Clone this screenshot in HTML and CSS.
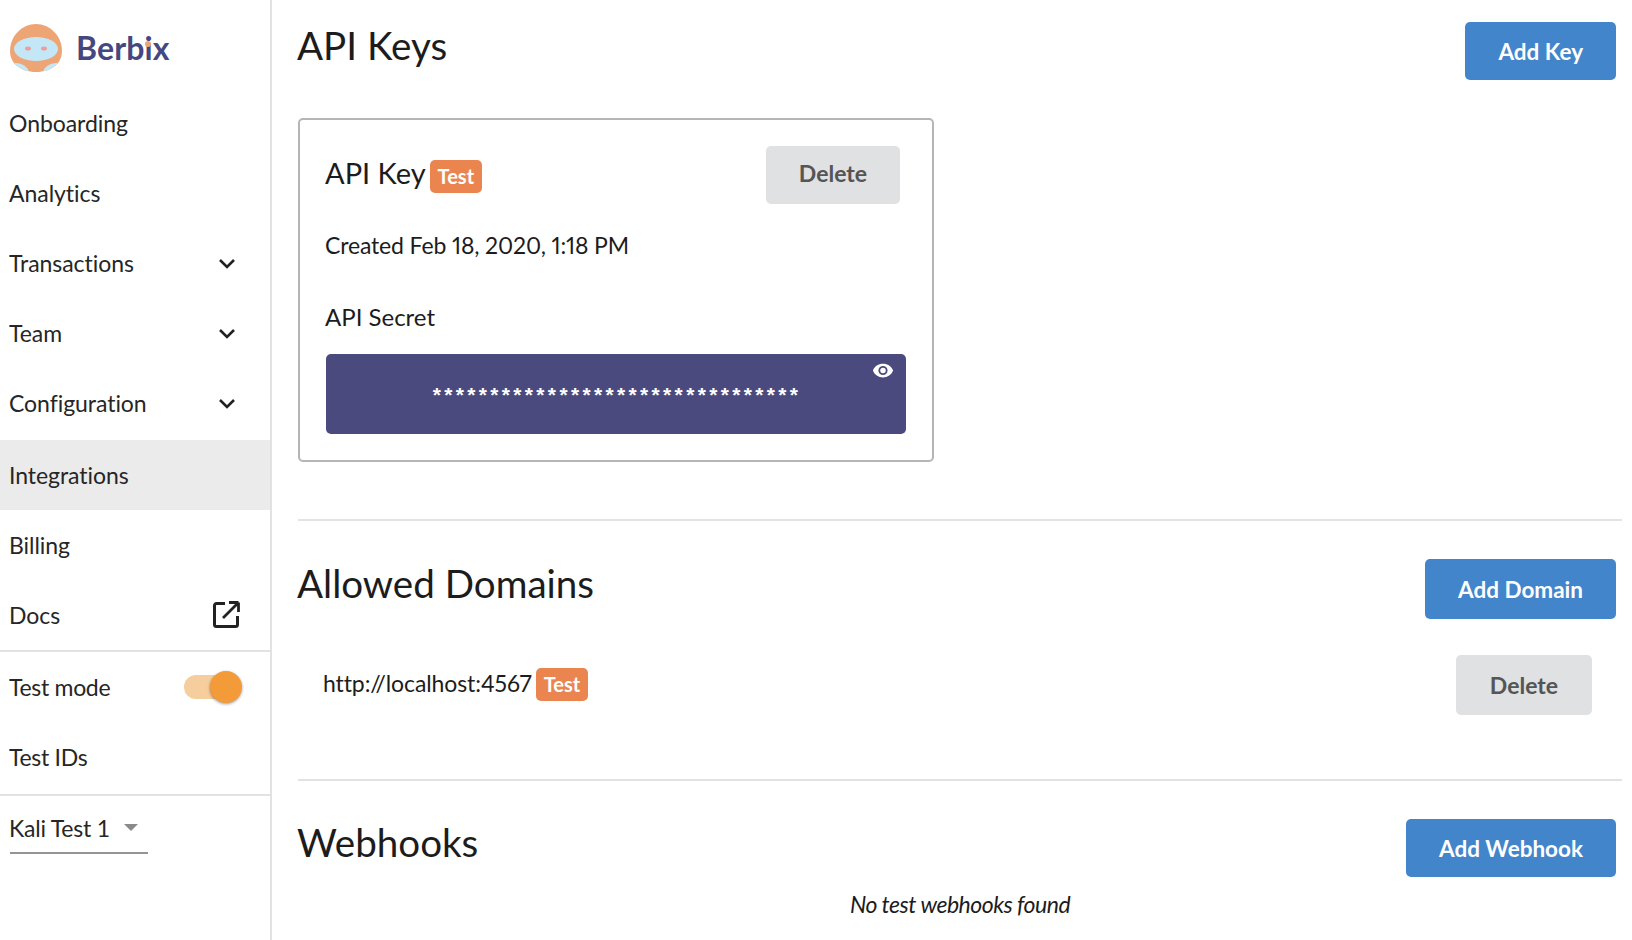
FILE: index.html
```html
<!DOCTYPE html>
<html lang="en">
<head>
<meta charset="utf-8">
<title>Berbix</title>
<link rel="stylesheet" href="styles.css">
</head>
<body>
<div class="app">
  <nav class="sidebar">
    <div class="brand">
      <svg class="logo" viewBox="0 0 52 50" width="52" height="50">
        <defs><clipPath id="lc"><path d="M26 1C12 1 0 13 0 28c0 12 10 21 26 21s26-9 26-21C52 13 40 1 26 1z"/></clipPath></defs>
        <path d="M26 1C12 1 0 13 0 28c0 12 10 21 26 21s26-9 26-21C52 13 40 1 26 1z" fill="#eea576"/>
        <g clip-path="url(#lc)">
          <ellipse cx="5" cy="50" rx="14" ry="10" fill="#c3e7f6"/>
          <ellipse cx="47" cy="50" rx="14" ry="10" fill="#c3e7f6"/>
        </g>
        <ellipse cx="26" cy="26" rx="22" ry="12" fill="#c3e7f6"/>
        <ellipse cx="18" cy="25.500" rx="3" ry="2" fill="#ef9c9c"/>
        <ellipse cx="34" cy="25.500" rx="3" ry="2" fill="#ef9c9c"/>
      </svg>
      <span class="brand-name">Berb<span class="brand-i">i</span>x</span>
    </div>
    <ul class="nav">
      <li class="nav-item">Onboarding</li>
      <li class="nav-item">Analytics</li>
      <li class="nav-item">Transactions<svg class="chev" viewBox="0 0 18 12" width="18" height="12"><path d="M2 2l7 7 7-7" fill="none" stroke="#222" stroke-width="2.600"/></svg></li>
      <li class="nav-item">Team<svg class="chev" viewBox="0 0 18 12" width="18" height="12"><path d="M2 2l7 7 7-7" fill="none" stroke="#222" stroke-width="2.600"/></svg></li>
      <li class="nav-item">Configuration<svg class="chev" viewBox="0 0 18 12" width="18" height="12"><path d="M2 2l7 7 7-7" fill="none" stroke="#222" stroke-width="2.600"/></svg></li>
      <li class="nav-item active">Integrations</li>
      <li class="nav-item">Billing</li>
      <li class="nav-item">Docs<svg class="ext" viewBox="0 0 27 27" width="27" height="27"><path d="M12 2.500H3.500a2 2 0 0 0-2 2v19a2 2 0 0 0 2 2h19a2 2 0 0 0 2-2V15" fill="none" stroke="#222" stroke-width="3"/><path d="M25.500 1.500H16M25.500 1.500V11M25.500 1.500L10 17" fill="none" stroke="#222" stroke-width="2.800"/></svg></li>
    </ul>
    <ul class="nav nav-test">
      <li class="nav-item">Test mode<span class="switch"><span class="knob"></span></span></li>
      <li class="nav-item">Test IDs</li>
    </ul>
    <div class="account">
      <div class="select">Kali Test 1<span class="caret"></span></div>
    </div>
  </nav>
  <main class="main">
    <section class="section section-keys">
      <header class="section-head">
        <h1>API Keys</h1>
        <button class="btn btn-primary">Add Key</button>
      </header>
      <article class="card">
        <div class="card-head">
          <h2>API Key</h2><span class="tag">Test</span>
          <button class="btn btn-muted btn-card">Delete</button>
        </div>
        <p class="created">Created Feb 18, 2020, 1:18 PM</p>
        <p class="secret-label">API Secret</p>
        <div class="secret">
          <span class="stars">********************************</span>
          <svg class="eye" viewBox="0 0 24 16" width="22" height="15"><path fill-rule="evenodd" d="M12 .5C7 .5 2.700 3.300 1 8c1.700 4.700 6 7.500 11 7.500S21.300 12.700 23 8C21.300 3.300 17 .5 12 .5zM12 13a5 5 0 1 1 0-10 5 5 0 0 1 0 10z" fill="#fff"/><circle cx="12" cy="8" r="3" fill="#fff"/></svg>
        </div>
      </article>
    </section>
    <section class="section section-domains">
      <header class="section-head">
        <h1>Allowed Domains</h1>
        <button class="btn btn-primary btn-tall">Add Domain</button>
      </header>
      <div class="domain">
        <span class="domain-url">http://localhost:4567</span><span class="tag">Test</span>
        <button class="btn btn-muted btn-row">Delete</button>
      </div>
    </section>
    <section class="section section-hooks">
      <header class="section-head">
        <h1>Webhooks</h1>
        <button class="btn btn-primary">Add Webhook</button>
      </header>
      <p class="empty">No test webhooks found</p>
    </section>
  </main>
</div>
</body>
</html>
```
FILE: styles.css
```css
* { box-sizing: border-box; }
html, body { margin: 0; height: 100%; }
body {
  font-family: Lato, "Open Sans", sans-serif;
  color: #1c1c1c;
  background: #fff;
  overflow: hidden;
}
.app { display: flex; height: 940px; }
.sidebar {
  width: 272px;
  flex: none;
  border-right: 2px solid #e2e2e2;
}
.brand {
  height: 88px;
  display: flex;
  align-items: flex-start;
  padding: 23px 0 0 10px;
  gap: 14px;
}
.logo { display: block; }
.brand-name {
  font-size: 32px;
  line-height: 50px;
  font-weight: 700;
  color: #474780;
  letter-spacing: 0.1px;
}
.brand-i { position: relative; }
.brand-i::after {
  content: "";
  position: absolute;
  left: 1px;
  top: 13px;
  width: 6px;
  height: 6px;
  border-radius: 50%;
  background: #eea576;
}
.nav { list-style: none; margin: 0; padding: 0; border-bottom: 2px solid #e2e2e2; }
.nav-item {
  height: 70px;
  display: flex;
  align-items: center;
  justify-content: space-between;
  padding: 0 30px 0 9px;
  font-size: 23px;
  letter-spacing: -0.05px;
  color: #262626;
}
.nav-item.active { background: #ebebeb; margin-top: 2px; }
.chev { display: block; margin: 2px 4px 0 0; }
.ext { display: block; margin-top: -1px; }
.nav-test { padding: 0 0 2px; }
.nav-test .nav-item { letter-spacing: -0.3px; }
.switch {
  position: relative;
  width: 54px;
  height: 24px;
  border-radius: 12px;
  background: #f6cd9c;
  margin-right: 2px;
}
.knob {
  position: absolute;
  right: -4px;
  top: -4px;
  width: 32px;
  height: 32px;
  border-radius: 50%;
  background: #f29b38;
  box-shadow: 0 1px 3px rgba(0,0,0,.4);
}
.account { padding: 17px 0 0 10px; }
.select {
  width: 138px;
  height: 41px;
  display: flex;
  align-items: center;
  font-size: 23px;
  letter-spacing: -0.2px;
  text-indent: -1px;
  color: #262626;
  border-bottom: 2px solid #949494;
  padding-bottom: 10px;
}
.caret {
  margin-left: 14px;
  border-left: 7px solid transparent;
  border-right: 7px solid transparent;
  border-top: 7px solid #8a8a8a;
}
.main { flex: 1; min-width: 0; padding: 0 10px 0 26px; }
.section { border-bottom: 2px solid #e2e2e2; }
.section-hooks { border-bottom: 0; }
.section-keys { height: 521px; }
.section-domains { height: 260px; padding-top: 38px; }
.section-hooks { padding-top: 38px; }
.section-keys .section-head { padding-top: 22px; }
.section-head {
  display: flex;
  justify-content: space-between;
  align-items: flex-start;
  padding-right: 6px;
}
h1 {
  margin: 0 0 0 -1px;
  font-size: 38.600px;
  font-weight: 400;
  line-height: 48px;
  color: #1c1c1c;
}
.section-keys h1 { margin-top: -1px; }
.section-hooks h1 { margin-top: -1px; }
.btn {
  border: 0;
  border-radius: 5px;
  font-family: inherit;
  font-size: 23px;
  font-weight: 700;
  text-align: center;
  padding: 0;
}
.btn-primary {
  height: 58px;
  padding: 0 33px;
  background: #4285cb;
  color: #fff;
  font-size: 22.500px;
}
.btn-tall { height: 60px; }
.btn-muted { background: #e0e1e2; color: #555; }
.card {
  width: 636px;
  height: 344px;
  margin-top: 38px;
  border: 2px solid #b5b5b5;
  border-radius: 5px;
  padding: 26px 26px 0;
}
.card-head {
  display: flex;
  align-items: flex-start;
  height: 58px;
}
h2 {
  margin: 9px 0 0 -1px;
  font-size: 29px;
  font-weight: 400;
  line-height: 36px;
  color: #1c1c1c;
}
.tag {
  background: #eb8550;
  color: #fff;
  font-size: 20px;
  font-weight: 700;
  border-radius: 5px;
  height: 33px;
  line-height: 33px;
  padding: 0 8px;
  margin: 14px 0 0 4px;
}
.btn-card { margin-left: auto; width: 134px; height: 58px; margin-right: 6px; padding-bottom: 4px; }
.created {
  margin: 26px 0 0 -1px;
  font-size: 23px;
  line-height: 30px;
  letter-spacing: -0.14px;
  font-variant-numeric: proportional-nums;
}
.secret-label {
  margin: 42px 0 0 -1px;
  font-size: 24px;
  line-height: 30px;
}
.secret {
  position: relative;
  width: 580px;
  height: 80px;
  margin-top: 22px;
  background: #4a4a7e;
  border-radius: 5px;
  color: #fff;
  display: flex;
  align-items: center;
  justify-content: center;
  padding: 2px 0 0 2px;
}
.stars { font-size: 21px; letter-spacing: 3.350px; font-family: "Liberation Sans", sans-serif; font-weight: 700; }
.eye { position: absolute; top: 9px; right: 12px; }
.domain {
  display: flex;
  align-items: flex-start;
  margin-top: 36px;
  padding: 0 30px 0 25px;
}
.domain-url { font-size: 23px; line-height: 33px; margin-top: 12px; letter-spacing: -0.1px; font-variant-numeric: proportional-nums; }
.domain .tag { margin: 13px 0 0 4px; }
.btn-row { margin-left: auto; width: 136px; height: 60px; }
.empty {
  margin: 13px 0 0;
  text-align: center;
  font-size: 23px;
  font-style: italic;
  letter-spacing: -0.5px;
}
```
